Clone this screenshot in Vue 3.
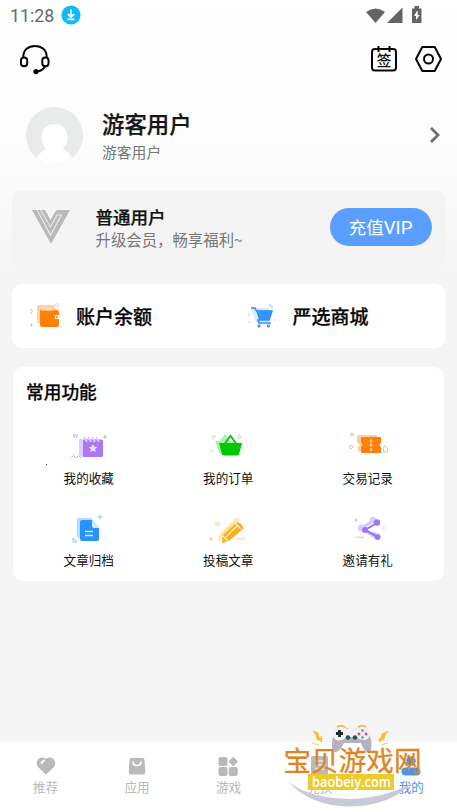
<script setup>
const features = [
  { id: 'fav', label: '我的收藏' },
  { id: 'order', label: '我的订单' },
  { id: 'trade', label: '交易记录' },
  { id: 'archive', label: '文章归档' },
  { id: 'post', label: '投稿文章' },
  { id: 'share', label: '邀请有礼' },
]
const tabs = [
  { id: 'heart', label: '推荐' },
  { id: 'bag', label: '应用' },
  { id: 'grid', label: '游戏' },
  { id: 'page', label: '兑换' },
  { id: 'me', label: '我的', active: true },
]
</script>

<template>
  <div class="screen">
    <div class="status">
      <span class="time">11:28</span>
      <svg class="dl" viewBox="0 0 20 20"><circle cx="10" cy="10" r="9.6" fill="#12b9f8"/><path d="M10 4.500v7M6.800 9l3.200 3 3.200-3M6.500 14.300h7" fill="none" stroke="#fff" stroke-width="1.700"/></svg>
      <svg class="signals" viewBox="0 0 60 20"><path d="M0 6Q10-1 19 6L9.500 17Z" fill="#646464"/><path d="M21 17 36.500 1.500V17Z" fill="#646464"/><path d="M46 2.500h2.500V0h4.500v2.500h2.500V17H46Z" fill="#646464"/><path d="m51 5-3 5h2v4l3.700-5h-2V5Z" fill="#fff"/></svg>
    </div>
    <header class="tools">
      <svg class="headset" viewBox="0 0 32 32" fill="none" stroke="#050505" stroke-width="2"><path d="M4.500 14C4 6 10 2 16.500 2S29 6 28.500 14"/><rect x="2" y="14" width="6.500" height="9" rx="3.200"/><rect x="24" y="14" width="6.500" height="9" rx="3.200"/><path d="M27 23Q24 28.500 17 28.500"/><circle cx="17.500" cy="28.500" r="1.700" fill="#050505"/></svg>
      <div class="sign">
        <svg viewBox="0 0 28 28" fill="none" stroke="#050505" stroke-width="2"><rect x="2" y="4" width="24" height="21.500" rx="3"/><path d="M8.500 1v6M19.500 1v6"/></svg>
        <span>签</span>
      </div>
      <svg class="gear" viewBox="0 0 28 28" fill="none" stroke="#050505" stroke-width="2" stroke-linejoin="round"><path d="M7.800 2h12.400L26.500 14l-6.300 12H7.800L1.500 14Z"/><circle cx="14" cy="14" r="4.500"/></svg>
    </header>

    <section class="profile">
      <svg class="avatar" viewBox="0 0 57 57"><defs><clipPath id="av"><circle cx="28.500" cy="28.500" r="28.500"/></clipPath></defs><g clip-path="url(#av)"><path d="M0 0h57v57H0Z" fill="#e8ebea"/><path d="M28.500 17C20 17 15.500 23 15.500 31c0 5 2 8 5 11-5 2-10 6-11 15h38c-1-9-6-13-11-15 3-3 5-6 5-11 0-8-4.500-14-13-14Z" fill="#fff"/></g></svg>
      <div class="who"><strong>游客用户</strong><span>游客用户</span></div>
      <svg class="arrow" viewBox="0 0 12 18"><path d="m2 2 7 7-7 7" fill="none" stroke="#6e6e6e" stroke-width="2.800"/></svg>
    </section>

    <section class="vip">
      <svg class="vlogo" viewBox="0 0 40 36"><path d="M1 1h13l5.500 10L24 3q1-2 3-2h12L20 35Z" fill="#b9b9b9"/><path d="m6 1 13.500 25L30.500 6h-4.500l-6.500 12L9.500 1" fill="none" stroke="#ececec" stroke-width="1.100"/></svg>
      <div class="level"><strong>普通用户</strong><span>升级会员，畅享福利~</span></div>
      <button>充值<b>VIP</b></button>
    </section>

    <section class="duo">
      <div>
        <svg viewBox="0 0 36 28"><path d="M7 4q0-2 2-2h15l1 4v14H7Z" fill="#ffd2aa"/><path d="M10 7h17q2 0 2 2v3h-4v4h4v6q0 2-2 2H12q-2 0-2-2Z" fill="#ff8108"/><path d="M11 7.500h13l-2-2H12Z" fill="#ffe2c8"/><circle cx="27" cy="14" r="1" fill="#ff8108"/><path d="m26.500 0 2 2-2 2-2-2ZM1 6l2 2-2 3Z" fill="none" stroke="#f0c394" stroke-width=".8"/><path d="M0 22h3M1.500 20.500v3" stroke="#ffb575"/></svg>
        <strong>账户余额</strong>
      </div>
      <div>
        <svg viewBox="0 0 36 28"><path d="M4 5h18l1 14H9Z" fill="#d9eaff"/><path d="M4 5h4l1.500 3H25l-3 9H11l1 3h12" fill="none" stroke="#2f8eff" stroke-width="1.600"/><path d="M9 7.500h16L22 17H12Z" fill="#3592f8"/><circle cx="12" cy="23" r="1.700" fill="#559dee"/><circle cx="21.500" cy="23" r="1.700" fill="#559dee"/><path d="M23 1v3h3ZM2 10v3M1 19h3M27 17h2" fill="none" stroke="#a5cbf5" stroke-width=".8"/></svg>
        <strong>严选商城</strong>
      </div>
    </section>

    <section class="common">
      <h2>常用功能</h2>
      <i class="speck"></i>
      <div class="grid">
        <div v-for="f in features" :key="f.id" class="feature">
          <svg viewBox="0 0 42 34">
            <g v-if="f.id === 'fav'"><path d="M11 8h20v18H13l-2-2Z" fill="#e0ceff"/><rect x="15" y="8.500" width="20" height="17.500" rx="1.500" fill="#aa78f7"/><path d="m16 6 3 5m1-5 3 5m1-5 3 5m1-5 3 5" stroke="#dfcaff" stroke-width="2"/><path d="m25 13 1.300 2.700 3 .4-2.200 2 .6 3-2.700-1.500-2.700 1.500.6-3-2.200-2 3-.4Z" fill="#eee0ff"/><path d="M5 4h5L7.500 7ZM3 27l2.500-2.500L8 27l2.500-2.500L13 27M35 6h4M37 4v4" fill="none" stroke="#c9aaf2"/></g>
            <g v-else-if="f.id === 'order'"><path d="M8 10h5l5-7 5 7h4l-3 13H13Z" fill="#aaf0b2"/><path d="M12 12h23l-3 11.500q-.5 1-2 1H17q-1.500 0-2-1Z" fill="#00c900"/><path d="m17.500 13 6-8 6 8" fill="none" stroke="#15bd20" stroke-width="2"/><path d="M5 5h4l-3 3ZM32 4l2 1-1 3-2-1ZM3 20h3M4.500 18.500v3" fill="none" stroke="#c8ddc7" stroke-width=".9"/></g>
            <g v-else-if="f.id === 'trade'"><path d="M10 6q0-2 2-2h18v16H11v-4l2-2-3-3Z" fill="#ffca9f"/><path d="M15 6h18q1 0 1 1v5q-3 2 0 4v5q0 1-1 1H15q-1 0-1-1v-5q3-2 0-4V7q0-1 1-1Z" fill="#ff7f08"/><path d="M20 10h8M20 14h8M20 18.500h8" stroke="#f69b42" stroke-width=".8"/><path d="M24 8.500v3M24 12.500v3M24 17v3" stroke="#fff0d0" stroke-width="1.500"/><path d="M3 3.500h4M5 1.500v4M4 14l2 2-2 2-2-2ZM36 17l2-2 3 3-1 3h-3Z" fill="none" stroke="#f4be7b"/></g>
            <g v-else-if="f.id === 'archive'"><path d="M9 4h15v20H11q-2 0-2-2Z" fill="#b5dcff"/><path d="M14 6h10l7 8v11q0 2-2 2H14q-2 0-2-2V8q0-2 2-2Z" fill="#2893f8"/><path d="M24 6v6q0 2 2 2h5Z" fill="#caf0ff"/><path d="M17 17.500h8M17 21.500h8" stroke="#d4edff" stroke-width="1.600"/><path d="M29.500 3h5M32 .5v5M5 24v4h4Z" fill="none" stroke="#9cc2ec"/></g>
            <g v-else-if="f.id === 'post'"><path d="m13 20 15-15q2-2 5 1L19 22l-8 5Z" fill="#ffe5a9"/><path d="m16 21 13-12q2-2 5 1t2 5L22 27l-7 2Z" fill="#f7b11c"/><path d="m19 23 12-12M28 9l6 6M16 22l5 5" stroke="#fff0c6" stroke-width="1.300"/><path d="M8 9h5L10.500 12ZM2 25h4M4 23v4M29 25q2-1 3 0t3 0 3 0" fill="none" stroke="#ffc69b"/></g>
            <g v-else><path d="m15 14 12-8M14 14l13 8" stroke="#d5c5fb" stroke-width="3"/><circle cx="26" cy="6" r="3.200" fill="#dacaff"/><circle cx="14" cy="14" r="3.200" fill="#dacaff"/><circle cx="27" cy="21" r="3" fill="#dacaff"/><path d="m30 9-12 7 13 7" fill="none" stroke="#9570ed" stroke-width="2"/><circle cx="30" cy="8.500" r="3.200" fill="#9e78f2"/><circle cx="18" cy="16" r="3" fill="#9e78f2"/><circle cx="30.500" cy="23" r="3" fill="#9e78f2"/><path d="M7 6h4M9 4v4M8 24q2-3 3 0 2-3 3 0 2-3 3 0M35 14h3" fill="none" stroke="#d3c0f0"/></g>
          </svg>
          <span>{{ f.label }}</span>
        </div>
      </div>
    </section>

    <nav>
      <div v-for="t in tabs" :key="t.id" class="tab" :class="{ active: t.active }">
        <svg viewBox="0 0 22 22" fill="currentColor">
          <g v-if="t.id === 'heart'"><path d="M11 20.500 3 13C-1 8 5 0 11 5c6-5 12 3 8 8Z"/><path d="M6 9.500 9.500 6" stroke="#fff" stroke-width="2"/></g>
          <g v-else-if="t.id === 'bag'"><path d="M5.500 4h11q2 0 2 2l.8 12.500q0 2-2 2H4.700q-2 0-2-2L3.500 6q0-2 2-2Z"/><path d="M7 7.500q0 4 4 4t4-4" fill="none" stroke="#fff" stroke-width="1.600"/></g>
          <g v-else-if="t.id === 'grid'"><rect x="1.500" y="3" width="9" height="9" rx="2"/><rect x="1.500" y="13" width="9" height="9" rx="2"/><rect x="11.700" y="13" width="9" height="9" rx="2"/><rect x="12.800" y="4" width="7" height="7" rx="1.200" transform="rotate(45 16.300 7.500)"/></g>
          <g v-else-if="t.id === 'page'"><path d="M4 2h13q2 0 2 2v16H2V4q0-2 2-2Z"/><path d="M6 7h9M6 11h9M6 15h9" stroke="#fff"/></g>
          <g v-else><circle cx="11" cy="7" r="4.800"/><rect x="1.500" y="13.500" width="19" height="8" rx="4"/></g>
        </svg>
        <span>{{ t.label }}</span>
      </div>
    </nav>

    <svg class="mark" viewBox="270 715 187 97">
      <path d="M288 781Q307 798 350 799 385 798 412 783 390 806 350 806.500 309 806 288 781Z" fill="#c9cad9"/>
      <path d="M333 751c-3-8 1-20 5-23q5-3 11 1h6q7-4 12 0c4 5 6 18 3 23q-5 2-9-9h-17q-6 12-11 8Z" fill="#b3b3bf"/>
      <path d="M332.500 732q1-5 7-5 5-1 8 2h8q4-3 9-2 6 1 5.500 8-1 5-7 5-4 0-7-3h-10q-3 3.500-7 3.500-7 0-6.500-8.500Z" fill="#f0f0f5"/>
      <path d="M336 733.500h7M339.500 730v7" stroke="#202832" stroke-width="2.800"/><circle cx="348" cy="737.500" r="2.300" fill="#2d535a"/><circle cx="355" cy="737.500" r="2.300" fill="#2d535a"/><circle cx="362.500" cy="730.500" r="1.400" fill="#43b6c2"/><circle cx="366" cy="734" r="1.400" fill="#ef4266"/><circle cx="359" cy="734" r="1.400" fill="#ef4266"/><circle cx="362.500" cy="737.500" r="1.400" fill="#58adc4"/><path d="M337 727q4-2.500 8 0M358 727q4-2.500 8 0" fill="none" stroke="#f2b536" stroke-width="1.500"/>
      <path d="m313 731 5 2 1 5 3 1-1-3 1 6-5-3-1-4ZM388 731l-6 3-1 4-2 1v3l5-3 1-4ZM312 743l7 2M388 743l-7 2" fill="#f8bd2d" stroke="#f8bd2d" stroke-width=".8"/>
      <text x="283.500" y="771" class="brand">宝贝游戏网</text>
      <rect x="308" y="774" width="86" height="16" fill="#eccc2d"/>
      <text x="312" y="786.500" class="domain" textLength="79" lengthAdjust="spacingAndGlyphs">baobeiy.com</text>
    </svg>
  </div>
</template>

<style>
body { margin: 0; }
</style>

<style scoped>
* { box-sizing: border-box; }
.screen { position: relative; width: 457px; height: 812px; display: flex; flex-direction: column; background: linear-gradient(#fff 0, #fdfdfd 120px, #f5f5f5 290px); font-family: "Noto Sans CJK SC", sans-serif; color: #111; overflow: hidden; }
svg { display: block; flex: none; }
strong, h2 { -webkit-text-stroke: .25px currentColor; }
.status { height: 32px; display: flex; align-items: center; padding: 0 34px 0 10px; }
.time { font: 17.8px/32px Roboto, sans-serif; color: #686868; width: 51px; }
.dl { width: 20px; height: 20px; margin-top: -2px; }
.signals { width: 60px; height: 20px; margin: 0 -3px 0 auto; }
.tools { height: 54px; display: flex; align-items: center; padding: 0 14px 0 19px; }
.headset { width: 31px; height: 31px; }
.sign { position: relative; width: 28px; height: 28px; margin-left: auto; margin-right: 16px; }
.sign svg { width: 28px; height: 28px; }
.sign span { position: absolute; left: 6.500px; top: 6px; font: 500 15px/18px "Noto Sans CJK SC", sans-serif; }
.gear { width: 29px; height: 28px; }
.profile { height: 98px; display: flex; align-items: center; padding: 0 16px 0 25.500px; }
.avatar { width: 57px; height: 57px; }
.who { margin: 3px 0 0 19.500px; flex: 1; display: flex; flex-direction: column; }
.who strong { font-size: 22.400px; line-height: 30px; font-weight: 500; color: #161616; }
.who span { font-size: 14.800px; line-height: 27px; color: #777; }
.arrow { width: 12px; height: 18px; }
.vip { height: 74px; margin: 7px 12px 0; background: #f4f4f4; border-radius: 8px; display: flex; align-items: center; padding: 0 13.500px 0 19px; }
.vlogo { width: 40px; height: 36px; margin-top: -2px; }
.level { margin: -2px 0 0 24.500px; flex: 1; display: flex; flex-direction: column; }
.level strong { font-size: 17.500px; line-height: 23px; font-weight: 500; }
.level span { font-size: 15.400px; line-height: 22px; color: #777; }
.vip button { width: 102px; height: 38px; margin-top: -3px; padding: 0; border: 0; border-radius: 19px; background: #5a9fff; color: #fff; font: 17.600px/37px "Noto Sans CJK SC", sans-serif; }
.vip b { font: 18.600px/30px Roboto, sans-serif; }
.duo { height: 64px; margin: 19px 12px 0; background: #fff; border-radius: 10px; display: grid; grid-template-columns: 1fr 1fr; }
.duo div { display: flex; align-items: center; padding-left: 18px; }
.duo svg { width: 36px; height: 28px; margin-top: 2px; }
.duo strong { font-size: 19px; font-weight: 500; margin-left: 10px; line-height: 28px; color: #050505; }
.common { position: relative; height: 214px; margin: 19px 13px 0; padding: 10px 0 0; background: #fff; border-radius: 10px; }
h2 { margin: 0 0 0 13px; font-size: 17.700px; line-height: 28px; font-weight: 500; color: #050505; }
.speck { position: absolute; left: 33px; top: 97px; width: 1px; height: 1px; background: #222; }
.grid { display: grid; grid-template-columns: repeat(3, 139.500px); grid-auto-rows: 82.500px; padding: 26px 0 0 6px; }
.feature { display: flex; flex-direction: column; align-items: center; }
.feature svg { width: 42px; height: 34px; }
.feature span { font-size: 12.600px; line-height: 18px; margin-top: 3.500px; }
nav { margin-top: auto; height: 70px; background: #fff; display: grid; grid-template-columns: repeat(5, 1fr); }
.tab { display: flex; flex-direction: column; align-items: center; padding-top: 12px; color: #b9b9b9; }
.tab svg { width: 22px; height: 22px; }
.tab span { font-size: 12.600px; line-height: 18px; margin-top: 2px; }
.active { color: #4d94ed; }
.mark { position: absolute; right: 0; bottom: 0; width: 187px; height: 97px; }
.brand { font: 400 27.600px "Noto Sans CJK SC", sans-serif; fill: #de8524; stroke: #de8524; stroke-width: .3px; }
.domain { font: 600 14.500px "Open Sans", sans-serif; fill: #fff; }
</style>
